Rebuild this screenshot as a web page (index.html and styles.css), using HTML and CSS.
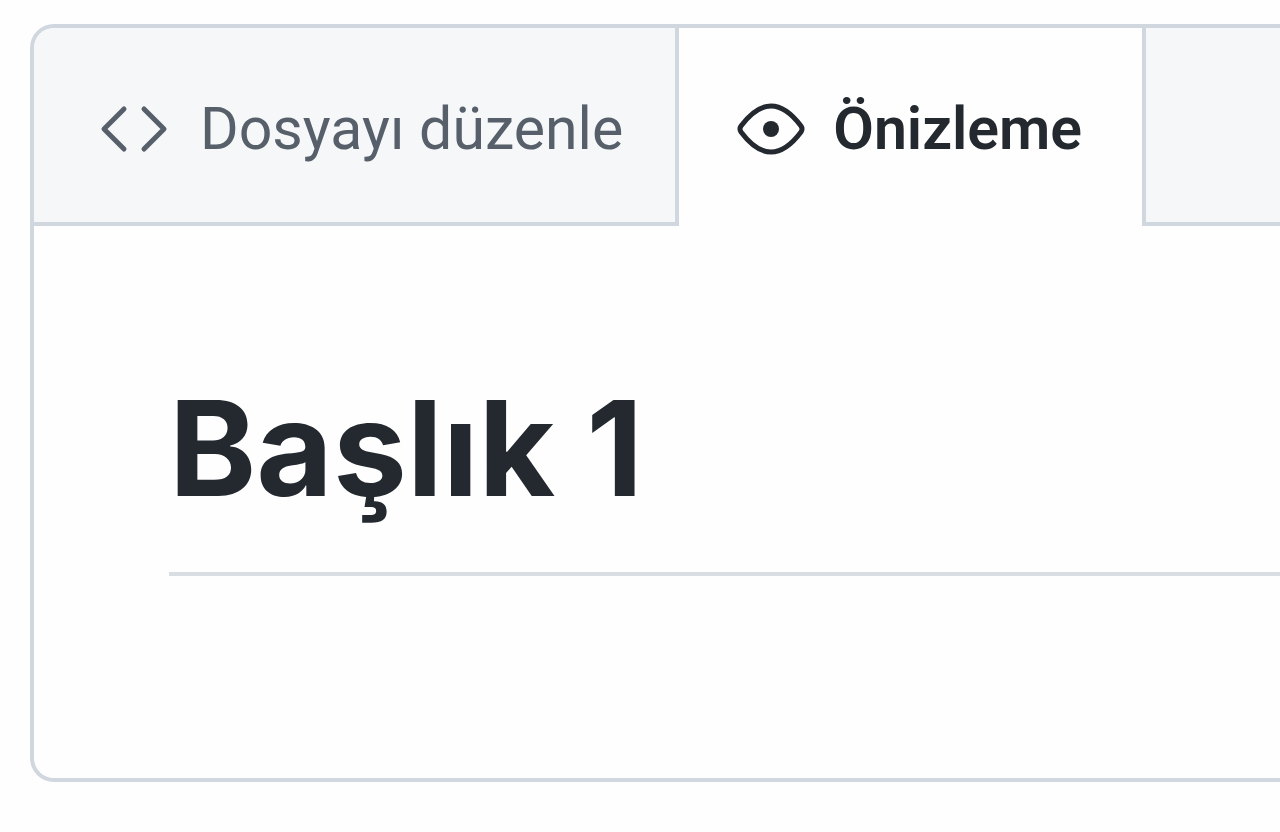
FILE: index.html
```html
<!DOCTYPE html>
<html lang="tr">
<head>
<meta charset="utf-8">
<title>Önizleme</title>
<link rel="stylesheet" href="styles.css">
</head>
<body>
<main class="editor">
  <nav class="tabs" aria-label="Dosya görünümü">
    <button class="tab tab-edit" type="button">
      <svg class="icon" viewBox="0 0 68 52" aria-hidden="true"><path d="M24 6 4 26l20 20M44 6l20 20-20 20"/></svg>
      <span class="label">Dosyayı düzenle</span>
    </button>
    <button class="tab tab-preview" type="button" aria-current="page">
      <svg class="icon" viewBox="0 0 68 52" aria-hidden="true"><path d="M4 23C13 11 24 3 34 3s21 8 30 20q2 3 0 6C55 41 44 49 34 49S13 41 4 29q-2-3 0-6Z"/><circle class="pupil" cx="34" cy="26" r="8"/></svg>
      <span class="label">Önizleme</span>
    </button>
    <div class="rest"></div>
  </nav>
  <article class="preview">
    <h1 class="heading">Başlık 1</h1>
  </article>
</main>
</body>
</html>
```
FILE: styles.css
```css
* { box-sizing: border-box; }
body {
  margin: 0;
  padding: 24px 0 48px 30px;
  background: #fefefe;
  color: #24292f;
  font-family: Inter, "Liberation Sans", sans-serif;
  overflow-x: hidden;
}
.editor {
  border: 4px solid #d0d7de;
  border-right: 0;
  border-radius: 24px 0 0 24px;
  overflow: hidden;
}
.tabs { display: flex; }
.tab {
  display: flex;
  align-items: center;
  height: 198px;
  margin: 0;
  border: 0;
  font: 400 59px/72px Roboto, sans-serif;
  white-space: nowrap;
}
.tab-edit {
  gap: 32px;
  padding: 8px 52px 0 66px;
  border-right: 4px solid #d0d7de;
  border-bottom: 4px solid #d0d7de;
  background: #f5f7f9;
  color: #57606a;
}
.tab-preview {
  gap: 28px;
  padding: 8px 60px 4px 58px;
  background: #fefefe;
  color: #24292f;
  font-weight: 600;
}
.rest {
  flex: 1;
  border-left: 4px solid #d0d7de;
  border-bottom: 4px solid #d0d7de;
  background: #f5f7f9;
}
.icon {
  flex: none;
  width: 68px;
  height: 52px;
  fill: none;
  stroke: currentColor;
  stroke-width: 5;
  stroke-linecap: round;
  stroke-linejoin: round;
}
.pupil { fill: currentColor; stroke: none; }
.preview { padding: 142px 0 202px 135px; }
.heading {
  margin: 0;
  padding-bottom: 44px;
  border-bottom: 4px solid #d8dee4;
  font-size: 132px;
  line-height: 160px;
}
```
